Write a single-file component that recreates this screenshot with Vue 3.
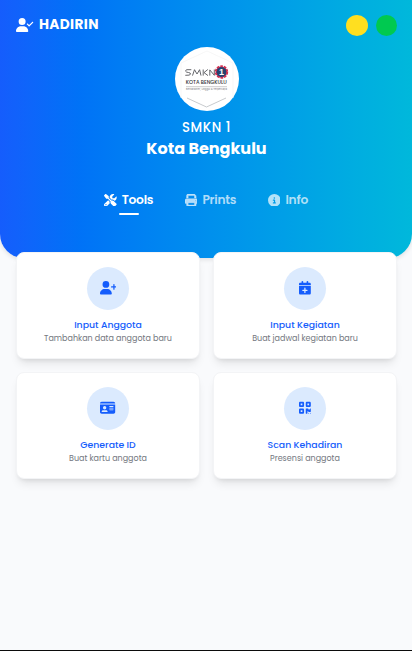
<script setup>
const person = 'M96 128a128 128 0 1 1 256 0A128 128 0 1 1 96 128zM0 482.3C0 383.8 79.8 304 178.3 304l91.4 0C368.2 304 448 383.8 448 482.3c0 16.4-13.3 29.7-29.7 29.7L29.7 512C13.3 512 0 498.7 0 482.3z'

const icons = {
  userCheck: { w: 640, d: person + 'M625 177L497 305c-9.4 9.4-24.6 9.4-33.9 0l-64-64c-9.4-9.4-9.4-24.6 0-33.9s24.6-9.4 33.9 0l47 47L591 143c9.4-9.4 24.6-9.4 33.9 0s9.4 24.6 0 33.9z' },
  userPlus: { w: 640, d: person + 'M504 312l0-64-64 0c-13.3 0-24-10.7-24-24s10.7-24 24-24l64 0 0-64c0-13.3 10.7-24 24-24s24 10.7 24 24l0 64 64 0c13.3 0 24 10.7 24 24s-10.7 24-24 24l-64 0 0 64c0 13.3-10.7 24-24 24s-24-10.7-24-24z' },
  tools: { w: 512, d: 'M78.6 5C69.1-2.4 55.6-1.5 47 7L7 47c-8.5 8.5-9.4 22-2.1 31.6l80 104c4.5 5.9 11.6 9.4 19 9.4l54.1 0 109 109c-14.7 29-10 65.4 14.3 89.6l112 112c12.5 12.5 32.8 12.5 45.3 0l64-64c12.5-12.5 12.5-32.8 0-45.3l-112-112c-24.2-24.2-60.6-29-89.6-14.3l-109-109 0-54.1c0-7.5-3.5-14.5-9.4-19L78.6 5zM19.9 396.1C7.2 408.8 0 426.1 0 444.1C0 481.6 30.4 512 67.9 512c18 0 35.3-7.2 48-19.9L233.7 374.3c-7.8-20.9-9-43.6-3.6-65.1l-61.7-61.7L19.9 396.1zM512 144c0-10.5-1.1-20.7-3.2-30.5c-2.4-11.2-16.1-14.1-24.2-6l-63.9 63.9c-3 3-7.1 4.7-11.3 4.7L352 176c-8.8 0-16-7.2-16-16l0-57.4c0-4.2 1.7-8.3 4.7-11.3l63.9-63.9c8.1-8.1 5.2-21.8-6-24.2C388.7 1.1 378.5 0 368 0C288.5 0 224 64.5 224 144l0 .8 85.3 85.3c36-9.1 75.8 .5 104 28.7L429 274.5c49-23 83-72.8 83-130.5zM56 432a24 24 0 1 1 48 0 24 24 0 1 1 -48 0z' },
  print: { w: 512, d: 'M128 0C92.7 0 64 28.7 64 64l0 96 64 0 0-96 226.7 0L384 93.3l0 66.7 64 0 0-66.7c0-17-6.7-33.3-18.7-45.3L400 18.7C388 6.7 371.7 0 354.7 0L128 0zM384 352l0 32 0 64-256 0 0-64 0-16 0-16 256 0zm64 32l32 0c17.7 0 32-14.3 32-32l0-96c0-35.3-28.7-64-64-64L64 192c-35.3 0-64 28.7-64 64l0 96c0 17.7 14.3 32 32 32l32 0 0 64c0 35.3 28.7 64 64 64l256 0c35.3 0 64-28.7 64-64l0-64zM432 248a24 24 0 1 1 0 48 24 24 0 1 1 0-48z' },
  info: { w: 512, d: 'M256 512A256 256 0 1 0 256 0a256 256 0 1 0 0 512zM216 336l24 0 0-64-24 0c-13.3 0-24-10.7-24-24s10.7-24 24-24l48 0c13.3 0 24 10.7 24 24l0 88 8 0c13.3 0 24 10.7 24 24s-10.7 24-24 24l-80 0c-13.3 0-24-10.7-24-24s10.7-24 24-24zm40-208a32 32 0 1 1 0 64 32 32 0 1 1 0-64z' },
  calendarPlus: { w: 448, d: 'M96 32l0 32L48 64C21.5 64 0 85.5 0 112l0 48 448 0 0-48c0-26.5-21.5-48-48-48l-48 0 0-32c0-17.7-14.3-32-32-32s-32 14.3-32 32l0 32L160 64l0-32c0-17.7-14.3-32-32-32S96 14.3 96 32zM448 192L0 192 0 464c0 26.5 21.5 48 48 48l352 0c26.5 0 48-21.5 48-48l0-272zM224 248c13.3 0 24 10.7 24 24l0 56 56 0c13.3 0 24 10.7 24 24s-10.7 24-24 24l-56 0 0 56c0 13.3-10.7 24-24 24s-24-10.7-24-24l0-56-56 0c-13.3 0-24-10.7-24-24s10.7-24 24-24l56 0 0-56c0-13.3 10.7-24 24-24z' },
  idCard: { w: 576, d: 'M0 96l576 0c0-35.3-28.7-64-64-64L64 32C28.7 32 0 60.7 0 96zm0 32L0 416c0 35.3 28.7 64 64 64l448 0c35.3 0 64-28.7 64-64l0-288L0 128zM64 405.3c0-29.5 23.9-53.3 53.3-53.3l117.3 0c29.5 0 53.3 23.9 53.3 53.3c0 5.9-4.8 10.7-10.7 10.7L74.7 416c-5.9 0-10.7-4.8-10.7-10.7zM176 192a64 64 0 1 1 0 128 64 64 0 1 1 0-128zm176 16c0-8.8 7.2-16 16-16l128 0c8.8 0 16 7.2 16 16s-7.2 16-16 16l-128 0c-8.8 0-16-7.2-16-16zm0 64c0-8.8 7.2-16 16-16l128 0c8.8 0 16 7.2 16 16s-7.2 16-16 16l-128 0c-8.8 0-16-7.2-16-16zm0 64c0-8.8 7.2-16 16-16l128 0c8.8 0 16 7.2 16 16s-7.2 16-16 16l-128 0c-8.8 0-16-7.2-16-16z' },
  qrcode: { w: 448, d: 'M0 80C0 53.5 21.5 32 48 32l96 0c26.5 0 48 21.5 48 48l0 96c0 26.5-21.5 48-48 48l-96 0c-26.5 0-48-21.5-48-48L0 80zM64 96l0 64 64 0 0-64L64 96zM0 336c0-26.5 21.5-48 48-48l96 0c26.5 0 48 21.5 48 48l0 96c0 26.5-21.5 48-48 48l-96 0c-26.5 0-48-21.5-48-48l0-96zm64 16l0 64 64 0 0-64-64 0zM304 32l96 0c26.5 0 48 21.5 48 48l0 96c0 26.5-21.5 48-48 48l-96 0c-26.5 0-48-21.5-48-48l0-96c0-26.5 21.5-48 48-48zm80 64l-64 0 0 64 64 0 0-64zM256 304c0-8.8 7.2-16 16-16l64 0c8.8 0 16 7.2 16 16s7.2 16 16 16l32 0c8.8 0 16-7.2 16-16s7.2-16 16-16s16 7.2 16 16l0 96c0 8.8-7.2 16-16 16l-64 0c-8.8 0-16-7.2-16-16s-7.2-16-16-16s-16 7.2-16 16l0 64c0 8.8-7.2 16-16 16l-32 0c-8.8 0-16-7.2-16-16l0-160zM368 480a16 16 0 1 1 0-32 16 16 0 1 1 0 32zm64 0a16 16 0 1 1 0-32 16 16 0 1 1 0 32z' },
}

const tabs = [
  { id: 'tools', label: 'Tools', icon: icons.tools, active: true },
  { id: 'prints', label: 'Prints', icon: icons.print, active: false },
  { id: 'info', label: 'Info', icon: icons.info, active: false },
]

const cards = [
  { id: 'member', title: 'Input Anggota', text: 'Tambahkan data anggota baru', icon: icons.userPlus },
  { id: 'event', title: 'Input Kegiatan', text: 'Buat jadwal kegiatan baru', icon: icons.calendarPlus },
  { id: 'idcard', title: 'Generate ID', text: 'Buat kartu anggota', icon: icons.idCard },
  { id: 'scan', title: 'Scan Kehadiran', text: 'Presensi anggota', icon: icons.qrcode },
]
</script>

<template>
  <div class="page">
    <header class="hero">
      <div class="topbar">
        <div class="brand">
          <svg class="brand-icon" :viewBox="`0 0 ${icons.userCheck.w} 512`"><path :d="icons.userCheck.d" /></svg>
          <span class="brand-name">HADIRIN</span>
        </div>
        <div class="dots">
          <span class="dot yellow"></span>
          <span class="dot green"></span>
        </div>
      </div>

      <div class="school">
        <svg class="logo" viewBox="0 0 64 64">
          <circle cx="32" cy="32" r="32" fill="#fff" />
          <path d="M6 16L32 4L58 16M6 16V51M58 16V51" fill="none" stroke="#f3f3f4" stroke-width=".7" />
          <path d="M12 51L31.500 60L51 51" fill="none" stroke="#b9bcc0" stroke-width=".8" />
          <g fill="none" stroke="#55565b" stroke-width=".9">
            <path d="M16.300 22.700H11.800Q10.500 23 10.700 24.300Q11 25.300 13.500 25.500Q15.800 25.800 15.500 27.200Q15.200 28.500 10.300 28.300" />
            <path d="M17.500 28.600L19.500 22.700L22 27L24.600 22.700L26 28.600M28.200 22.500V28.600M32.800 22.500L29 25.600L33 28.600M34.800 28.600V22.900L39.300 28.300V22.500" />
          </g>
          <circle cx="46.500" cy="25" r="5.600" fill="#26477c" stroke="#d32f50" stroke-width="2.200" stroke-dasharray="2.600 .9" />
          <circle cx="46.500" cy="25" r="4.700" fill="#26426f" />
          <text x="46.500" y="28.200" class="logo-one">1</text>
          <text x="10.800" y="37.300" textLength="41" lengthAdjust="spacingAndGlyphs" class="logo-city">KOTA BENGKULU</text>
          <path d="M11 39.700H52" stroke="#aaa" stroke-width=".6" />
          <text x="11" y="43.200" textLength="41" lengthAdjust="spacingAndGlyphs" class="logo-motto">Berkarakter, Unggul &amp; Terpercaya</text>
        </svg>
        <div class="school-name">SMKN 1</div>
        <div class="school-city">Kota Bengkulu</div>
      </div>

      <nav class="tabs">
        <div v-for="tab in tabs" :key="tab.id" class="tab" :class="[tab.id, { active: tab.active }]">
          <div class="tab-row">
            <svg class="tab-icon" :viewBox="`0 0 ${tab.icon.w} 512`"><path :d="tab.icon.d" /></svg>
            <span class="tab-label">{{ tab.label }}</span>
          </div>
          <span class="underline"></span>
        </div>
      </nav>
    </header>

    <main class="grid">
      <article v-for="card in cards" :key="card.id" class="card" :class="card.id">
        <div class="bubble">
          <svg class="card-icon" :viewBox="`0 0 ${card.icon.w} 512`"><path :d="card.icon.d" /></svg>
        </div>
        <div class="card-title">{{ card.title }}</div>
        <div class="card-text">{{ card.text }}</div>
      </article>
    </main>
  </div>
</template>

<style>
body {
  background: #f9fafb;
}
</style>

<style scoped>
.page {
  box-sizing: border-box;
  height: 651px;
  background: #f9fafc;
  border-bottom: 1px solid #0b0b0b;
  font-family: Poppins, Inter, sans-serif;
  overflow: hidden;
}
.hero {
  box-sizing: border-box;
  height: 258px;
  padding: 14px 15px 0 16px;
  border-radius: 0 0 24px 24px;
  background: linear-gradient(to right in oklab, #155dfc, #00b8db);
  box-shadow: 0 2px 4px rgba(0, 0, 0, 0.1);
  color: #fff;
}
.topbar {
  display: flex;
  align-items: center;
  justify-content: space-between;
  height: 22px;
}
.brand {
  display: flex;
  align-items: center;
  gap: 5.500px;
}
svg {
  display: block;
  fill: currentColor;
}
.brand-icon {
  height: 14px;
}
.brand-name {
  padding-bottom: 1px;
  font-size: 13.700px;
  line-height: 20px;
  font-weight: 700;
  letter-spacing: 0.350px;
}
.dots {
  display: flex;
  gap: 8px;
}
.dot {
  width: 22px;
  height: 21px;
  border-radius: 50%;
}
.green {
  width: 21px;
}
.yellow {
  background: #ffdf20;
}
.green {
  background: #00c950;
}
.school {
  display: flex;
  flex-direction: column;
  align-items: center;
  margin-top: 11px;
}
.logo {
  width: 64px;
  height: 64px;
  margin-left: 1px;
}
.logo-one {
  font: 700 9px "Liberation Sans", sans-serif;
  fill: #fff;
  text-anchor: middle;
}
.logo-city {
  font: 500 5.200px Poppins, Inter, sans-serif;
  fill: #35363a;
}
.logo-motto {
  font: 400 2.600px Inter, sans-serif;
  fill: #77787d;
}
.school-name {
  margin-top: 7px;
  line-height: 20px;
  font-size: 13.200px;
  font-weight: 500;
  letter-spacing: 0.600px;
}
.school-city {
  line-height: 22px;
  font-size: 16px;
  font-weight: 700;
}
.tabs {
  display: flex;
  justify-content: center;
  gap: 31.500px;
  margin-top: 31px;
  margin-right: 1px;
}
.tab {
  display: flex;
  flex-direction: column;
  align-items: center;
  color: rgba(255, 255, 255, 0.700);
}
.tab.active {
  color: #fff;
}
.tab-row {
  display: flex;
  align-items: center;
  gap: 5px;
  height: 18px;
}
.tab-icon {
  height: 12.700px;
}
.prints .tab-icon {
  stroke: currentColor;
  stroke-width: 18px;
}
.tab-label {
  font-size: 12.250px;
  line-height: 18px;
  font-weight: 600;
  letter-spacing: -0.250px;
}
.underline {
  width: 20px;
  height: 2px;
  margin-top: 4px;
  border-radius: 2px;
}
.active .underline {
  background: #fff;
}
.grid {
  position: relative;
  display: grid;
  grid-template-columns: 184px 184px;
  grid-auto-rows: 107px;
  gap: 13px;
  margin-top: -6px;
  padding-left: 16px;
}
.card {
  box-sizing: border-box;
  display: flex;
  flex-direction: column;
  align-items: center;
  padding-top: 14px;
  border: 1px solid #f3f4f6;
  border-radius: 8px;
  background: #fff;
  box-shadow: 0 7px 10px -3px rgba(0, 0, 0, 0.100), 0 3px 5px -3px rgba(0, 0, 0, 0.100);
}
.bubble {
  box-sizing: border-box;
  display: flex;
  align-items: center;
  justify-content: center;
  width: 42px;
  height: 43px;
  padding-bottom: 1px;
  border-radius: 50%;
  background: #dbeafe;
  color: #155dfc;
}
.card-icon {
  height: 13.500px;
}
.card-title {
  margin-top: 8px;
  color: #155dfc;
  font-size: 9.330px;
  line-height: 14px;
  font-weight: 500;
}
.card-text {
  color: #737780;
  font-size: 8px;
  line-height: 13px;
}
</style>
